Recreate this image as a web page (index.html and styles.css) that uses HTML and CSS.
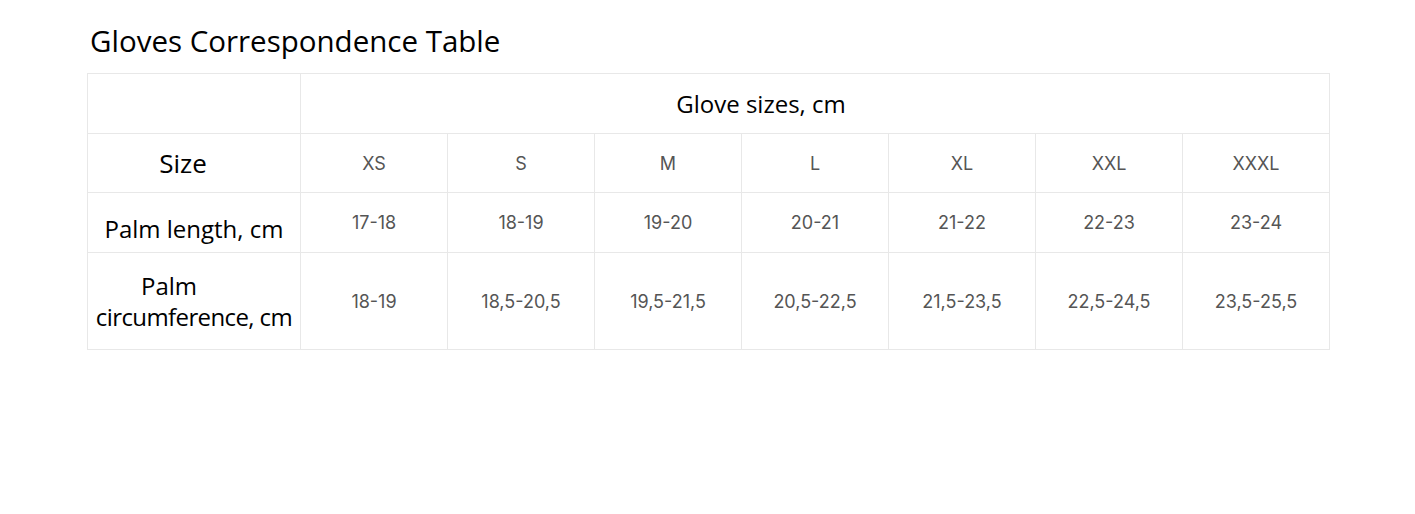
FILE: index.html
```html
<!DOCTYPE html>
<html lang="en">
<head>
<meta charset="utf-8">
<title>Gloves Correspondence Table</title>
<link rel="stylesheet" href="styles.css">
</head>
<body>
<div class="page">
  <h1 class="title">Gloves Correspondence Table</h1>
  <table class="sizes">
    <colgroup>
      <col class="c-head">
      <col class="c-val"><col class="c-val"><col class="c-val"><col class="c-val"><col class="c-val"><col class="c-val"><col class="c-val">
    </colgroup>
    <tr class="r1">
      <td class="head"></td>
      <td class="group" colspan="7">Glove sizes, cm</td>
    </tr>
    <tr class="r2">
      <td class="head"><span class="size">Size</span></td>
      <td>XS</td><td>S</td><td>M</td><td>L</td><td>XL</td><td>XXL</td><td>XXXL</td>
    </tr>
    <tr class="r3">
      <td class="head">Palm length, cm</td>
      <td>17-18</td><td>18-19</td><td>19-20</td><td>20-21</td><td>21-22</td><td>22-23</td><td>23-24</td>
    </tr>
    <tr class="r4">
      <td class="head"><span class="palm">Palm</span><br><span class="circ">circumference, cm</span></td>
      <td>18-19</td><td>18,5-20,5</td><td>19,5-21,5</td><td>20,5-22,5</td><td>21,5-23,5</td><td>22,5-24,5</td><td>23,5-25,5</td>
    </tr>
  </table>
</div>
</body>
</html>
```

FILE: styles.css
```css
html, body {
  margin: 0;
  padding: 0;
  background: #ffffff;
}

.page {
  padding: 22px 0 0 87px;
}

.title {
  margin: 0 0 13px 3px;
  font-family: "Open Sans", "Noto Sans", sans-serif;
  font-weight: 400;
  font-size: 29.5px;
  line-height: 38px;
  color: #000;
}

.sizes {
  border-collapse: collapse;
  table-layout: fixed;
  width: 1243px;
}

.c-head { width: 213px; }
.c-val { width: 147px; }

.sizes td {
  border: 1px solid #e8e8e8;
  padding: 0;
  text-align: center;
  vertical-align: middle;
  font-family: "Inter", "Lato", sans-serif;
  font-size: 18px;
  color: #555555;
}

.sizes td.head {
  font-family: "Open Sans", "Noto Sans", sans-serif;
  font-size: 24px;
  line-height: 31px;
  color: #000;
}

.sizes .r3 td.head {
  padding-top: 12px;
}

.sizes td.group {
  font-family: "Open Sans", "Noto Sans", sans-serif;
  font-size: 24px;
  color: #000;
  padding-right: 108px;
}

.size {
  font-size: 26px;
  margin-right: 22px;
}

.palm {
  margin-right: 50px;
}

.circ {
  letter-spacing: -0.6px;
}

.r1 { height: 60px; }
.r2 { height: 59px; }
.r3 { height: 60px; }
.r4 { height: 97px; }
```
